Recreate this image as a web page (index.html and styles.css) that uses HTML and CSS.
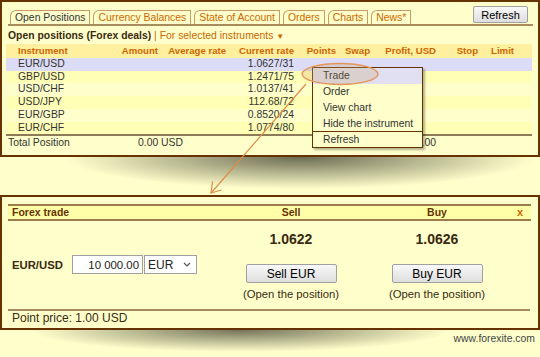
FILE: index.html
```html
<!DOCTYPE html>
<html lang="en">
<head>
    <meta charset="UTF-8">
    <title>Open Positions - Forex trade</title>
    <link rel="stylesheet" href="styles.css">
</head>
<body>
<div class="page">

    <!-- positions panel -->
    <div class="panel positions">
        <div class="tabbar">
            <div class="tabs">
                <span class="tab active">Open Positions</span>
                <span class="tab">Currency Balances</span>
                <span class="tab">State of Account</span>
                <span class="tab">Orders</span>
                <span class="tab">Charts</span>
                <span class="tab">News*</span>
            </div>
            <button class="btn refresh">Refresh</button>
        </div>

        <div class="subhead">
            <b>Open positions (Forex deals)</b>
            <span class="filter">| For selected instruments <span class="arrow">&#9660;</span></span>
        </div>

        <table class="grid">
            <colgroup>
                <col style="width:94px"><col style="width:60px"><col style="width:68px">
                <col style="width:68px"><col style="width:44px"><col style="width:34px">
                <col style="width:66px"><col style="width:42px"><col style="width:50px">
            </colgroup>
            <thead>
                <tr>
                    <th>Instrument</th><th>Amount</th><th>Average rate</th><th>Current rate</th>
                    <th>Points</th><th>Swap</th><th>Profit, USD</th><th>Stop</th><th>Limit</th>
                </tr>
            </thead>
            <tbody>
                <tr class="selected"><td>EUR/USD</td><td></td><td></td><td>1.0627/31</td><td></td><td></td><td></td><td></td><td></td></tr>
                <tr><td>GBP/USD</td><td></td><td></td><td>1.2471/75</td><td></td><td></td><td></td><td></td><td></td></tr>
                <tr><td>USD/CHF</td><td></td><td></td><td>1.0137/41</td><td></td><td></td><td></td><td></td><td></td></tr>
                <tr><td>USD/JPY</td><td></td><td></td><td>112.68/72</td><td></td><td></td><td></td><td></td><td></td></tr>
                <tr><td>EUR/GBP</td><td></td><td></td><td>0.8520/24</td><td></td><td></td><td></td><td></td><td></td></tr>
                <tr><td>EUR/CHF</td><td></td><td></td><td>1.0774/80</td><td></td><td></td><td></td><td></td><td></td></tr>
            </tbody>
            <tfoot>
                <tr>
                    <td class="total-label">Total Position</td>
                    <td class="total-amount" colspan="2">0.00 USD</td>
                    <td></td><td></td><td></td><td>0.00</td><td></td><td></td>
                </tr>
            </tfoot>
        </table>
    </div>

    <div class="shadow"></div>

    <!-- trade dialog -->
    <div class="panel trade">
        <div class="bar">
            <span class="bar-title">Forex trade</span>
            <span class="bar-col">Sell</span>
            <span class="bar-col">Buy</span>
            <span class="close">x</span>
        </div>

        <div class="deal">
            <div class="deal-pair">
                <span class="pair">EUR/USD</span>
                <input class="amount" type="text" value="10 000.00">
                <div class="select">
                    <span>EUR</span>
                    <svg width="8" height="5" viewBox="0 0 8 5"><path d="M1 1l3 3 3-3" fill="none" stroke="#555" stroke-width="1.2"/></svg>
                </div>
            </div>
            <div class="side">
                <div class="price">1.0622</div>
                <button class="btn deal-btn">Sell EUR</button>
                <div class="caption">(Open the position)</div>
            </div>
            <div class="side">
                <div class="price">1.0626</div>
                <button class="btn deal-btn">Buy EUR</button>
                <div class="caption">(Open the position)</div>
            </div>
        </div>

        <div class="rule"></div>
        <div class="point">Point price: 1.00 USD</div>
    </div>

    <div class="credit">www.forexite.com</div>

    <!-- context menu -->
    <ul class="menu">
        <li class="hover">Trade</li>
        <li>Order</li>
        <li>View chart</li>
        <li class="short">Hide the instrument</li>
        <li class="sep">Refresh</li>
    </ul>

    <!-- callout annotation -->
    <svg class="callout" width="540" height="357" viewBox="0 0 540 357">
        <ellipse cx="340" cy="74" rx="38" ry="10.5" fill="rgba(205,170,110,0.28)" stroke="#e6955a" stroke-width="1.4"/>
        <path d="M306 84L211 193" stroke="#e08a40" stroke-width="1.2" fill="none"/>
        <path d="M212.5 181.5L211 193L221.5 190" stroke="#e08a40" stroke-width="1.2" fill="none"/>
    </svg>
</div>
</body>
</html>
```

FILE: styles.css
```css
body {
    margin: 0;
    background-color: #ffffcc;
    font-family: "Liberation Sans", Arial, sans-serif;
    color: #333;
}

.page {
    position: relative;
    width: 540px;
    height: 357px;
    overflow: hidden;
}

.panel {
    box-sizing: border-box;
    border: 2px solid #663300;
    background-color: #ffffcc;
}

/* positions panel */
.positions {
    height: 157px;
    padding: 0 5px 0 4px;
}

.tabbar {
    display: flex;
    justify-content: space-between;
    align-items: flex-end;
    height: 22px;
    margin-left: 2px;
    border-bottom: 2px solid #a88c5c;
}

.tabs {
    display: flex;
    gap: 3px;
    margin-left: 2px;
}

.tab {
    height: 13px;
    line-height: 13px;
    padding: 0 4px;
    border: 1px solid #c89a66;
    border-bottom: none;
    border-radius: 6px 0 0 0;
    font-size: 10.4px;
    color: #cc6600;
}

.tab.active {
    color: #333;
}

.btn {
    box-sizing: border-box;
    border: 1px solid #a0a0a0;
    border-radius: 2px;
    background: linear-gradient(#f8f8f8, #dedede);
    font-family: "Liberation Sans", Arial, sans-serif;
    color: #000;
    padding: 0;
}

.refresh {
    align-self: flex-start;
    margin: 4px 5px 0 0;
    width: 55px;
    height: 17px;
    font-size: 11px;
}

.subhead {
    padding: 3px 0 0 2px;
    line-height: 14px;
    font-size: 10.4px;
}

.subhead b {
    color: #3a2a10;
}

.filter {
    color: #cc6600;
}

.filter .arrow {
    font-size: 8px;
}

.grid {
    width: 526px;
    table-layout: fixed;
    border-collapse: collapse;
    border-spacing: 0;
    font-size: 10.4px;
}

.grid th,
.grid td {
    padding: 0;
    text-align: right;
    white-space: nowrap;
    overflow: hidden;
}

.grid th {
    height: 14px;
    line-height: 14px;
    font-size: 9.6px;
    color: #cc6600;
    background-color: #fff0a0;
}

.grid tbody td {
    height: 12.7px;
    line-height: 12.7px;
}

.grid tbody tr:nth-child(even) td {
    background-color: #ffffb6;
}

.grid tbody tr.selected td {
    background-color: #dcdcf6;
}

.grid th:nth-child(1),
.grid tbody td:nth-child(1) {
    text-align: left;
    padding-left: 12px;
}

.grid th:nth-child(2), .grid td:nth-child(2),
.grid th:nth-child(3), .grid td:nth-child(3),
.grid th:nth-child(4), .grid td:nth-child(4) {
    padding-right: 2px;
}

.grid th:nth-child(5), .grid td:nth-child(5),
.grid th:nth-child(6), .grid td:nth-child(6),
.grid th:nth-child(7), .grid td:nth-child(7),
.grid th:nth-child(8), .grid td:nth-child(8) {
    padding-right: 4px;
}

.grid th:nth-child(9), .grid td:nth-child(9) {
    padding-right: 18px;
}

.grid tfoot td {
    height: 14px;
    line-height: 14px;
    border-top: 2px solid #8c7a58;
}

.grid tfoot td.total-label {
    text-align: left;
    padding-left: 2px;
}

.grid tfoot td.total-amount {
    text-align: left;
    padding-left: 38px;
}

.shadow {
    height: 38px;
    background: radial-gradient(ellipse 235px 32px at 300px 0, rgba(80, 80, 60, 0.85), rgba(80, 80, 60, 0) 100%);
}

/* trade dialog */
.trade {
    height: 135px;
    padding: 7px 7px 0 6px;
}

.bar {
    display: grid;
    grid-template-columns: 210px 146px 146px 1fr;
    height: 13px;
    line-height: 13px;
    border-top: 2px solid #9c7c4c;
    border-bottom: 2px solid #9c7c4c;
    background-color: #ffffa8;
    font-size: 10.5px;
    font-weight: bold;
    color: #663300;
}

.bar-title {
    padding-left: 4px;
}

.bar-col {
    text-align: center;
}

.close {
    padding-left: 7px;
    color: #cc6600;
    font-size: 11px;
}

.deal {
    display: flex;
}

.deal-pair {
    width: 210px;
    box-sizing: border-box;
    padding: 34px 0 0 4px;
    display: flex;
    align-items: flex-start;
}

.pair {
    width: 60px;
    line-height: 20px;
    font-size: 11.3px;
    font-weight: bold;
    color: #3a2a10;
}

.amount {
    box-sizing: border-box;
    width: 71px;
    height: 19px;
    margin: 0;
    padding: 0 3px 0 0;
    border: 1px solid #a0a0a0;
    background: #fff;
    text-align: right;
    font-family: "Liberation Sans", Arial, sans-serif;
    font-size: 11.4px;
    color: #222;
}

.select {
    box-sizing: border-box;
    width: 53px;
    height: 19px;
    margin-left: 1px;
    padding: 0 5px 0 3px;
    display: flex;
    align-items: center;
    justify-content: space-between;
    border: 1px solid #a0a0a0;
    background: #fff;
    font-size: 12px;
    color: #222;
}

.side {
    width: 146px;
    padding-top: 10px;
    display: flex;
    flex-direction: column;
    align-items: center;
}

.price {
    line-height: 16px;
    font-size: 14px;
    font-weight: bold;
    color: #3a2a10;
}

.deal-btn {
    margin-top: 17px;
    width: 91px;
    height: 19px;
    font-size: 12px;
}

.caption {
    margin-top: 4px;
    line-height: 14px;
    font-size: 11.3px;
    color: #3a2a10;
}

.rule {
    height: 2px;
    margin: 8px 1px 0 0;
    background-color: #a48c60;
}

.point {
    padding-left: 4px;
    line-height: 14px;
    font-size: 12px;
    color: #3a2a10;
}

.credit {
    height: 27px;
    box-sizing: border-box;
    padding: 3px 5px 0 0;
    text-align: right;
    line-height: 11px;
    font-size: 10.4px;
    color: #444;
    background: radial-gradient(ellipse 210px 22px at 240px 0, rgba(80, 80, 60, 0.8), rgba(80, 80, 60, 0) 100%);
}

/* context menu, drawn over the table */
.menu {
    position: absolute;
    left: 312px;
    top: 67px;
    width: 109px;
    margin: 0;
    padding: 0;
    list-style: none;
    border: 1px solid #663300;
    background-color: #ffffcc;
    box-shadow: 2px 2px 2px rgba(0, 0, 0, 0.3);
    font-size: 10.4px;
}

.menu li {
    height: 16px;
    line-height: 16px;
    padding-left: 10px;
    color: #333;
}

.menu li.short {
    height: 15px;
    line-height: 15px;
}

.menu li.hover {
    background-color: #e0e0f2;
    color: #222;
}

.menu li.sep {
    height: 15px;
    line-height: 15px;
    border-top: 1px solid #663300;
}

.callout {
    position: absolute;
    left: 0;
    top: 0;
    pointer-events: none;
}
```
